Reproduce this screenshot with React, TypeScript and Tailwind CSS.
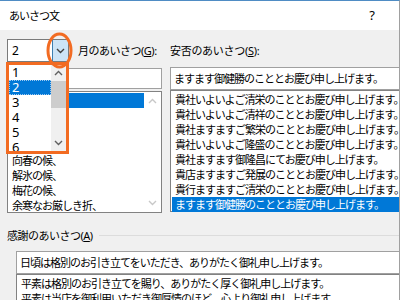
import React from "react";

const ORANGE = "#f26b22";

// rows 1-3 sit behind the open dropdown
const monthItems = ["", "", "", "", "向春の候、", "解氷の候、", "梅花の候、", "余寒なお厳しき折、"];

const safetyItems = [
  "貴社いよいよご清栄のこととお慶び申し上げます。",
  "貴社いよいよご清祥のこととお慶び申し上げます。",
  "貴社ますますご繁栄のこととお慶び申し上げます。",
  "貴社いよいよご隆盛のこととお慶び申し上げます。",
  "貴社ますます御隆昌にてお慶び申し上げます。",
  "貴店ますますご発展のこととお慶び申し上げます。",
  "貴行ますますご清栄のこととお慶び申し上げます。",
  "ますます御健勝のこととお慶び申し上げます。",
];

const thanksItems = [
  "平素は格別のお引き立てを賜り、ありがたく厚く御礼申し上げます。",
  "平素は当店を御利用いただき御厚情のほど、心より御礼申し上げます。",
];

const Chevron = ({ up, color }: { up?: boolean; color: string }) => (
  <svg width="9" height="6" viewBox="0 0 9 6">
    <path
      d={up ? "M1 5 L4.5 1.5 L8 5" : "M1 1 L4.5 4.5 L8 1"}
      fill="none"
      stroke={color}
      strokeWidth="1.4"
    />
  </svg>
);

const App: React.FC = () => {
  return (
    <div className="relative w-[400px] h-[300px] overflow-hidden bg-[#f0f0f0] border-t border-[#4f8cc4] border-r border-r-[#a0a0a0] text-[11px] tracking-[-1px] text-black font-['Noto_Sans','Noto_Sans_CJK_JP',sans-serif] leading-none">
      {/* Title bar */}
      <div className="h-[29px] bg-white flex items-center justify-between pl-[9px] pr-[24px]">
        <span>あいさつ文</span>
        <span className="text-[13px] tracking-normal">?</span>
      </div>

      {/* Body */}
      <div className="pl-[7px] pt-[9px]">
        <div className="flex gap-[8px]">
          {/* Left column */}
          <div className="w-[155px] shrink-0 flex flex-col">
            <div className="h-[23px] flex items-center">
              <div className="w-[62px] h-[23px] flex bg-white border border-[#7a7a7a]">
                <div className="flex-1 flex items-center pl-[4px] text-[12px] tracking-normal">2</div>
                <div className="w-[16px] h-full bg-[#cce4f7] border-l border-[#3c7fb1] flex items-center justify-center">
                  <Chevron color="#404040" />
                </div>
              </div>
              <span className="ml-[9px] whitespace-nowrap tracking-[-0.5px]">
                月のあいさつ(<span className="underline">G</span>):
              </span>
            </div>
            <div className="mt-[6px] h-[21px] bg-white border border-[#a0a0a0]" />
            <div className="mt-[2px] h-[122px] bg-white border border-[#828282] flex p-[1px]">
              <div className="flex-1 flex flex-col">
                {monthItems.map((t, i) => (
                  <div
                    key={i}
                    className={
                      "h-[15px] shrink-0 flex items-center pl-[3px] whitespace-nowrap " +
                      (i === 0 ? "bg-[#0078d7] text-white" : "")
                    }
                  >
                    {t}
                  </div>
                ))}
              </div>
              <div className="w-[16px] flex flex-col items-center justify-between py-[5px]">
                <Chevron up color="#c8c8c8" />
                <Chevron color="#c8c8c8" />
              </div>
            </div>
          </div>

          {/* Right column */}
          <div className="w-[250px] shrink-0 flex flex-col">
            <div className="h-[23px] flex items-center whitespace-nowrap tracking-[-0.3px]">
              安否のあいさつ(<span className="underline">S</span>):
            </div>
            <div className="mt-[5px] h-[23px] bg-white border border-[#a0a0a0] flex items-center pl-[3px] whitespace-nowrap">
              ますます御健勝のこととお慶び申し上げます。
            </div>
            <div className="h-[122px] bg-white border border-[#828282] p-[1px] flex flex-col">
              {safetyItems.map((t, i) => (
                <div
                  key={t}
                  className={
                    "h-[15px] shrink-0 flex items-center pl-[3px] whitespace-nowrap " +
                    (i === 7 ? "bg-[#0078d7] text-white" : "")
                  }
                >
                  {t}
                </div>
              ))}
            </div>
          </div>
        </div>

        {/* Thanks section */}
        <div className="mt-[15px] h-[14px] flex items-center gap-[6px]">
          <span className="whitespace-nowrap tracking-[-0.5px]">
            感謝のあいさつ(<span className="underline">A</span>)
          </span>
          <div className="flex-1 h-px bg-[#dcdcdc]" />
        </div>
        <div className="ml-[9px] mt-[9px] w-[400px]">
          <div className="h-[23px] bg-white border border-[#a0a0a0] flex items-center pl-[3px] whitespace-nowrap">
            日頃は格別のお引き立てをいただき、ありがたく御礼申し上げます。
          </div>
          <div className="h-[40px] bg-white border border-[#828282] p-[1px]">
            {thanksItems.map((t) => (
              <div key={t} className="h-[15px] flex items-center pl-[3px] whitespace-nowrap">
                {t}
              </div>
            ))}
          </div>
        </div>
      </div>

      {/* Open dropdown list, highlighted */}
      <div
        className="absolute left-[6px] top-[61px] w-[63px] h-[92px] border-[3px] bg-white flex overflow-hidden"
        style={{ borderColor: ORANGE }}
      >
        <div className="flex-1 flex flex-col">
          {["1", "2", "3", "4", "5", "6"].map((n) => (
            <div
              key={n}
              className={
                "h-[15px] shrink-0 flex items-center pl-[3px] text-[13px] tracking-normal " +
                (n === "2" ? "bg-[#0078d7] text-white outline-1 outline-dotted outline-[#9ec9f0] -outline-offset-1" : "")
              }
            >
              {n}
            </div>
          ))}
        </div>
        <div className="w-[15px] bg-[#f0f0f0] flex flex-col items-center">
          <div className="h-[16px] flex items-center justify-center">
            <Chevron up color="#606060" />
          </div>
          <div className="w-full h-[27px] bg-[#cdcdcd]" />
          <div className="flex-1" />
          <div className="h-[16px] flex items-center justify-center">
            <Chevron color="#606060" />
          </div>
        </div>
      </div>

      {/* Orange ring around dropdown button */}
      <svg className="absolute left-[45px] top-[30px]" width="30" height="40" viewBox="0 0 30 40">
        <ellipse cx="14.5" cy="19.5" rx="11.5" ry="16.5" fill="none" stroke={ORANGE} strokeWidth="3" />
      </svg>
    </div>
  );
};

export default App;
